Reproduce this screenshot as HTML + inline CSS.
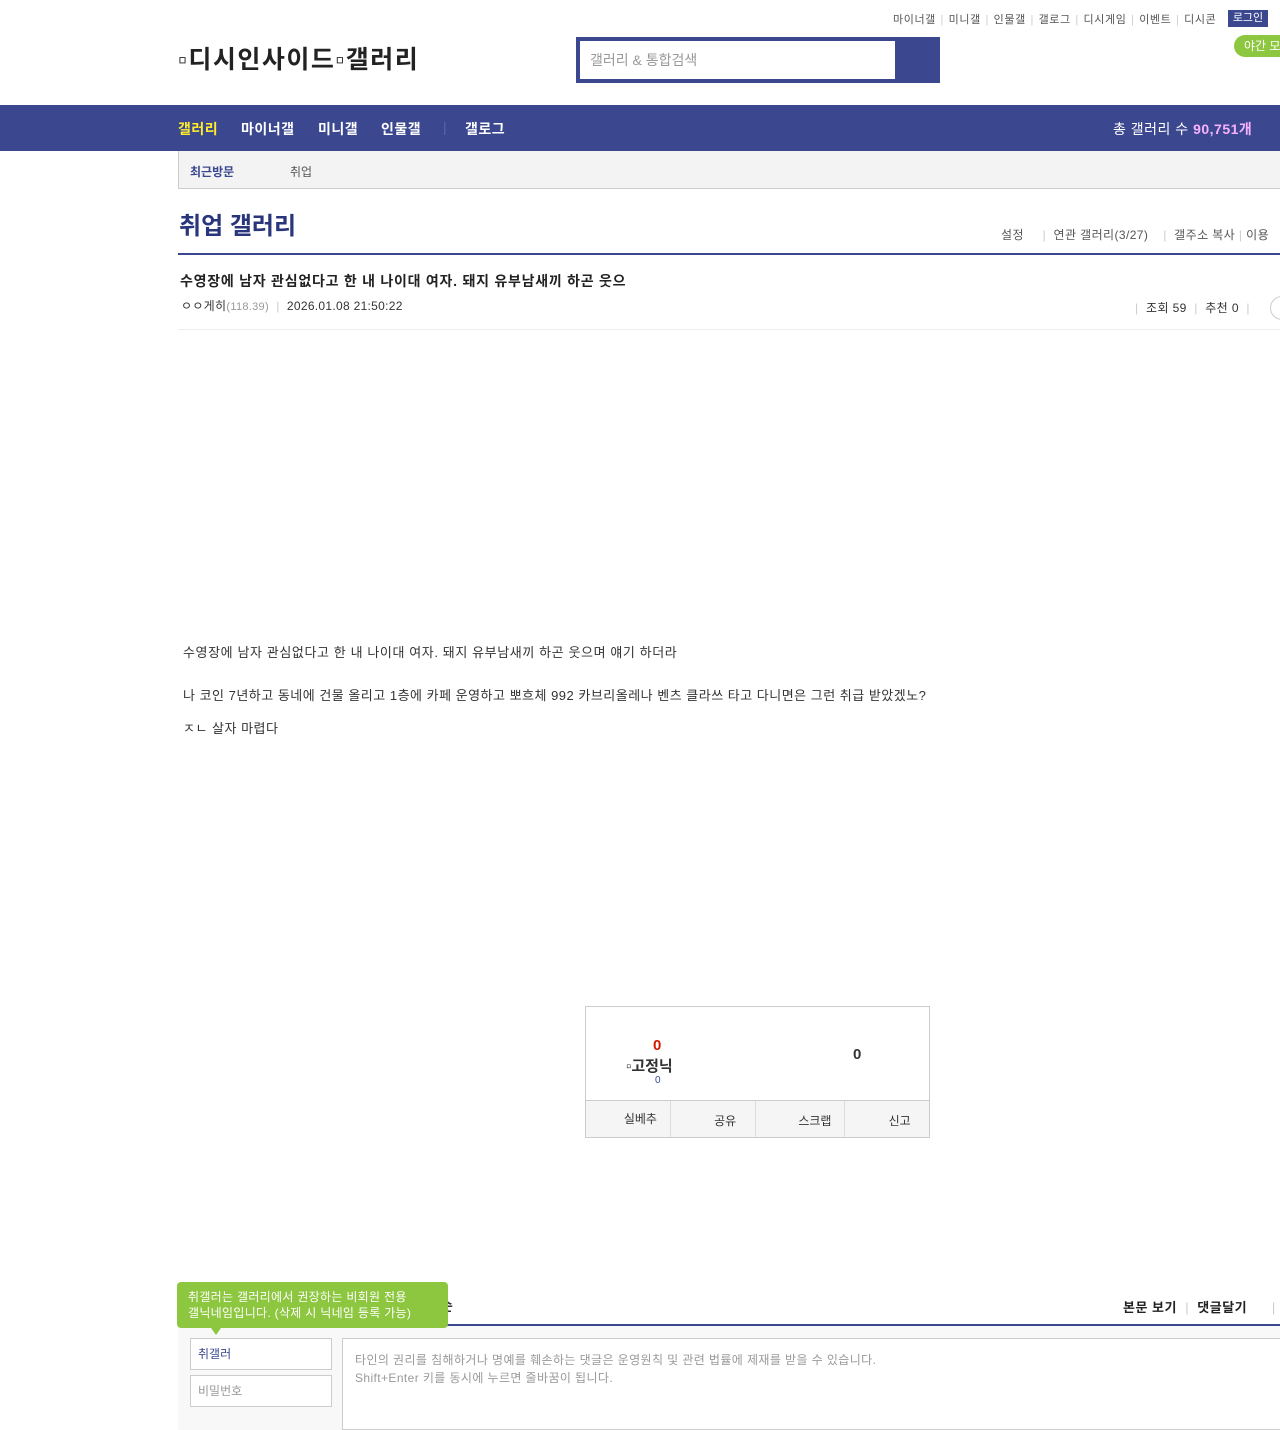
<!DOCTYPE html>
<html><head><meta charset="utf-8"><style>
*{margin:0;padding:0;box-sizing:border-box}
body{width:1280px;height:1430px;overflow:hidden;background:#fff;font-family:"Liberation Sans","Noto Sans CJK KR",sans-serif;color:#333;position:relative}
.a{position:absolute;white-space:nowrap}
.top{font-size:11px;color:#555;top:11px;left:893px;letter-spacing:.6px}
.top i{color:#ccc;font-style:normal;margin:0 1px}
.nv{position:absolute;top:119px;font-size:14px;font-weight:bold;color:#fff;letter-spacing:.5px}
</style></head><body>
<div class="a top">마이너갤 <i>|</i> 미니갤 <i>|</i> 인물갤 <i>|</i> 갤로그 <i>|</i> 디시게임 <i>|</i> 이벤트 <i>|</i> 디시콘</div>
<div class="a" style="left:1228px;top:10px;width:40px;height:17px;background:#3b4890;color:#fff;font-size:11px;text-align:center;line-height:17px">로그인</div>
<div class="a" style="left:1234px;top:35px;width:60px;height:22px;background:#8dc63f;border-radius:11px;color:#fff;font-size:12px;line-height:22px;padding-left:10px">야간 모</div>
<div class="a" style="left:178px;top:40px;font-size:25px;font-weight:bold;color:#222;letter-spacing:1.5px">▫디시인사이드▫갤러리</div>
<div class="a" style="left:576px;top:37px;width:364px;height:46px;background:#3b4890"></div>
<div class="a" style="left:580px;top:41px;width:315px;height:38px;background:#fff;font-size:14px;color:#999;line-height:38px;padding-left:10px">갤러리 &amp; 통합검색</div>
<div class="a" style="left:0;top:105px;width:1280px;height:46px;background:#3b4890"></div>
<div class="nv" style="left:178px;color:#ffed2c">갤러리</div>
<div class="nv" style="left:241px">마이너갤</div>
<div class="nv" style="left:318px">미니갤</div>
<div class="nv" style="left:381px">인물갤</div>
<div class="nv" style="left:443px;color:#5b68a8;font-weight:normal">|</div>
<div class="nv" style="left:465px">갤로그</div>
<div class="a" style="left:1113px;top:119px;font-size:14px;color:#fff;letter-spacing:.5px">총 갤러리 수 <b style="color:#f9b2ff">90,751개</b></div>
<div class="a" style="left:178px;top:151px;width:1102px;height:38px;background:#f3f3f3;border-left:1px solid #ccc;border-bottom:1px solid #ccc"></div>
<div class="a" style="left:190px;top:163px;font-size:12px;font-weight:bold;color:#3b4890">최근방문</div>
<div class="a" style="left:290px;top:163px;font-size:12px;color:#555">취업</div>
<div class="a" style="left:179px;top:206px;font-size:24px;font-weight:bold;color:#29367c">취업 갤러리</div>
<div class="a" style="left:1001px;top:226px;font-size:12px;color:#555;letter-spacing:.4px">설정 &nbsp;&nbsp;&nbsp;&nbsp;<span style="color:#ccc">|</span>&nbsp; 연관 갤러리(3/27) &nbsp;&nbsp;&nbsp;<span style="color:#ccc">|</span>&nbsp; 갤주소 복사 <span style="color:#ccc">|</span> 이용</div>
<div class="a" style="left:178px;top:253px;width:1102px;height:2px;background:#3b4890"></div>
<div class="a" style="left:180px;top:271px;font-size:14px;font-weight:bold;color:#222;letter-spacing:.75px">수영장에 남자 관심없다고 한 내 나이대 여자. 돼지 유부남새끼 하곤 웃으</div>
<div class="a" style="left:181px;top:297px;font-size:12px;color:#333;letter-spacing:.3px">ㅇㅇ게히<span style="color:#999;font-size:11px">(118.39)</span> <span style="color:#ccc">&nbsp;|&nbsp;</span> 2026.01.08 21:50:22</div>
<div class="a" style="left:1135px;top:299px;font-size:12px;color:#333;letter-spacing:.4px"><span style="color:#ccc">|</span>&nbsp; 조회 59 <span style="color:#ccc">&nbsp;|&nbsp;</span> 추천 0 <span style="color:#ccc">&nbsp;|</span></div>
<div class="a" style="left:1270px;top:296px;width:24px;height:24px;border:1px solid #ccc;border-radius:12px"></div>
<div class="a" style="left:178px;top:329px;width:1102px;height:1px;background:#eee"></div>
<div class="a" style="left:183px;top:642px;font-size:13px;color:#333;letter-spacing:.6px">수영장에 남자 관심없다고 한 내 나이대 여자. 돼지 유부남새끼 하곤 웃으며 얘기 하더라</div>
<div class="a" style="left:183px;top:685px;font-size:13px;color:#333;letter-spacing:.5px">나 코인 7년하고 동네에 건물 올리고 1층에 카페 운영하고 뽀흐체 992 카브리올레나 벤츠 클라쓰 타고 다니면은 그런 취급 받았겠노?</div>
<div class="a" style="left:183px;top:718px;font-size:13px;color:#333;letter-spacing:.5px">ㅈㄴ 살자 마렵다</div>
<div class="a" style="left:585px;top:1006px;width:345px;height:132px;border:1px solid #ccc"></div>
<div class="a" style="left:586px;top:1100px;width:343px;height:37px;background:#f5f5f5;border-top:1px solid #ccc;font-size:12px;color:#333;display:flex">
<div style="flex:1;text-align:center;line-height:37px;border-right:1px solid #ddd;padding-left:25px">실베추</div><div style="flex:1;text-align:center;line-height:40px;border-right:1px solid #ddd;padding-left:25px">공유</div><div style="flex:1;text-align:center;line-height:40px;border-right:1px solid #ddd;padding-left:30px">스크랩</div><div style="flex:1;text-align:center;line-height:40px;padding-left:25px">신고</div></div>
<div class="a" style="left:653px;top:1037px;font-size:15px;font-weight:bold;color:#d31900">0</div>
<div class="a" style="left:626px;top:1055px;font-size:15px;font-weight:bold;color:#333">▫고정닉</div>
<div class="a" style="left:655px;top:1075px;font-size:10px;color:#3b4890">0</div>
<div class="a" style="left:853px;top:1046px;font-size:15px;font-weight:bold;color:#333">0</div>
<div class="a" style="left:440px;top:1296px;font-size:14px;font-weight:bold">순</div>
<div class="a" style="left:1123px;top:1297px;font-size:13px;font-weight:bold;color:#222;letter-spacing:.5px">본문 보기 <span style="color:#ccc;font-weight:normal">&nbsp;|&nbsp;</span> 댓글달기 &nbsp;&nbsp;&nbsp;&nbsp;&nbsp;<span style="color:#ccc;font-weight:normal">|</span></div>
<div class="a" style="left:178px;top:1324px;width:1102px;height:2px;background:#3b4890"></div>
<div class="a" style="left:178px;top:1326px;width:1102px;height:104px;background:#f8f8f8"></div>
<div class="a" style="left:190px;top:1338px;width:142px;height:32px;background:#fff;border:1px solid #ccc;font-size:12px;color:#3b4890;line-height:30px;padding-left:7px">취갤러</div>
<div class="a" style="left:190px;top:1375px;width:142px;height:32px;background:#fff;border:1px solid #ccc;font-size:12px;color:#999;line-height:30px;padding-left:7px">비밀번호</div>
<div class="a" style="left:342px;top:1338px;width:938px;height:92px;background:#fff;border:1px solid #ccc;border-right:0;font-size:12px;color:#999;padding:12px 12px;line-height:18px;letter-spacing:.4px">타인의 권리를 침해하거나 명예를 훼손하는 댓글은 운영원칙 및 관련 법률에 제재를 받을 수 있습니다.<br>Shift+Enter 키를 동시에 누르면 줄바꿈이 됩니다.</div>
<div class="a" style="left:177px;top:1282px;width:271px;height:46px;background:#8dc63f;border-radius:4px;color:#fff;font-size:12px;line-height:16px;padding:7px 0 0 11px;letter-spacing:.3px">취갤러는 갤러리에서 권장하는 비회원 전용<br>갤닉네임입니다. (삭제 시 닉네임 등록 가능)</div>
<div class="a" style="left:211px;top:1328px;width:0;height:0;border-left:5px solid transparent;border-right:5px solid transparent;border-top:7px solid #8dc63f"></div>
</body></html>
